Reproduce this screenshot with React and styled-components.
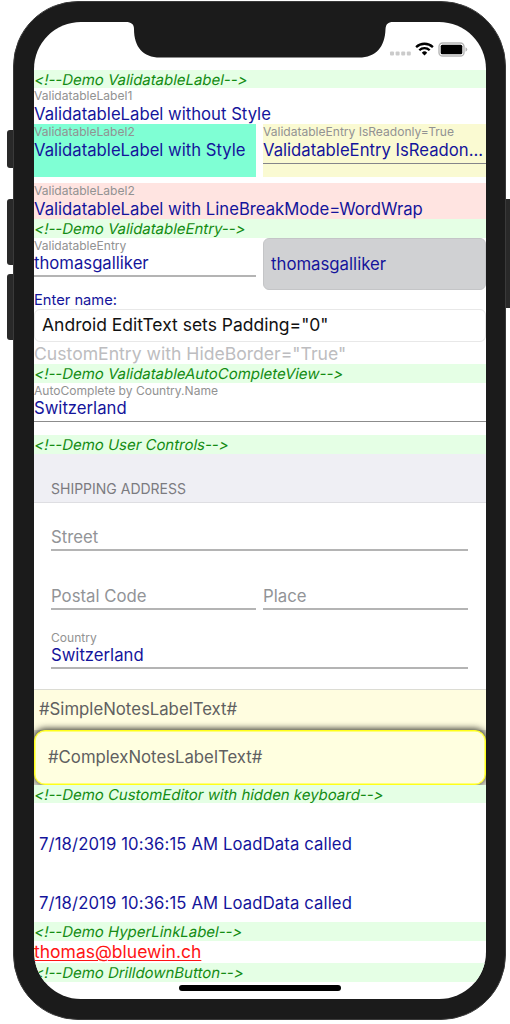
import React from "react";
import styled, { createGlobalStyle } from "styled-components";

const Global = createGlobalStyle`
  *, *::before, *::after { box-sizing: border-box; }
  body {
    margin: 0;
    background: #fff;
    font-family: Inter, "Liberation Sans", sans-serif;
    font-feature-settings: "calt" 0;
  }
`;

const Page = styled.main`
  width: 510px;
  height: 1024px;
  padding: 1px 0 0 13px;
  position: relative;
  overflow: hidden;
`;

const SideButton = styled.i`
  position: absolute;
  top: ${(p) => p.$top}px;
  ${(p) => p.$side}: ${(p) => (p.$side === "left" ? 7 : -3)}px;
  width: 12px;
  height: ${(p) => p.$height}px;
  border-radius: 3px;
  background: #292929;
`;

const Device = styled.div`
  position: relative;
  width: 493px;
  height: 1018.5px;
  padding: 20px 19px 20px 20px;
  border-radius: 65px;
  background: #1b1b1b;
  border: 1px solid #3a3a3a;
`;

const Screen = styled.div`
  position: relative;
  width: 452px;
  height: 976.5px;
  overflow: hidden;
  border-radius: 47px;
  background: #fff;
  display: flex;
  flex-direction: column;
`;

const Notch = styled.svg`
  position: absolute;
  top: -1px;
  left: 92px;
`;

const StatusBar = styled.header`
  height: 48px;
  flex: none;
  display: flex;
  justify-content: flex-end;
  padding: 19px 18px 0 0;
`;

const CommentBar = styled.div`
  flex: none;
  height: ${(p) => p.$h || 18.4}px;
  line-height: 18.4px;
  background: #e5ffe5;
  color: #148c14;
  font-size: 14.95px;
  white-space: nowrap;
`;

const Slanted = styled.span`
  display: block;
  width: fit-content;
  transform: translate(-1.3px, 0.6px) skewX(-11deg);
  transform-origin: left bottom;
`;

const Field = styled.div`
  flex: none;
  width: ${(p) => (p.$w ? p.$w + "px" : "auto")};
  height: ${(p) => p.$h}px;
  margin-top: ${(p) => p.$mt || 0}px;
  background: ${(p) => p.$bg || "transparent"};
`;

const Caption = styled.div`
  height: 14.6px;
  line-height: 15.6px;
  font-size: 12.05px;
  color: #929292;
  white-space: nowrap;
`;

const Value = styled.div`
  height: ${(p) => p.$h || 21.5}px;
  line-height: 22px;
  font-size: 16.7px;
  letter-spacing: ${(p) => p.$ls || 0}px;
  color: #14149b;
  white-space: nowrap;
  border-bottom: ${(p) => (p.$line ? `${p.$thick || 1}px solid ${p.$line}` : "none")};
`;

const Columns = styled.div`
  flex: none;
  display: flex;
  gap: 7px;
  margin-bottom: ${(p) => p.$mb || 0}px;
`;

const DisabledEntry = styled.div`
  width: 223px;
  height: 52.3px;
  padding: 0 7px;
  border: 1px solid #c4c5c7;
  border-radius: 6px;
  background: #d0d1d3;
  color: #14149b;
  font-size: 16.75px;
  line-height: 50px;
`;

const NameLabel = styled.div`
  flex: none;
  height: 18.5px;
  line-height: 20px;
  font-size: 14.7px;
  color: #14149b;
`;

const TextEntry = styled.div`
  flex: none;
  height: 33px;
  padding: 0 7px;
  border: 1px solid #e8e8e8;
  border-radius: 6px;
  font-size: 17.5px;
  line-height: 29px;
  color: #111;
  white-space: nowrap;
`;

const BareEntry = styled.div`
  flex: none;
  height: 22.8px;
  line-height: 23px;
  font-size: 17.6px;
  color: #bdbdc0;
  white-space: nowrap;
`;

const SectionHeader = styled.div`
  flex: none;
  height: 49px;
  padding: 26px 17px 0;
  border-bottom: 1px solid #dedee2;
  background: #efeff4;
  color: #7b7b80;
  font-size: 14px;
  line-height: 17px;
`;

const Form = styled.section`
  flex: none;
  height: 186.5px;
  padding: 24px 18px 0 17px;
`;

const FormInput = styled.div`
  flex: ${(p) => (p.$w ? "none" : 1)};
  width: ${(p) => (p.$w ? p.$w + "px" : "auto")};
  height: 24px;
  margin-bottom: 35px;
  border-bottom: 2px solid #b4b4b4;
  color: #929497;
  font-size: 16.75px;
  line-height: 21px;
`;

const SimpleNote = styled.div`
  flex: none;
  height: 40.5px;
  padding: 0 5px;
  border-top: 1px solid #dcdcd4;
  background: #fffde0;
  color: #606060;
  font-size: 16.75px;
  line-height: 39px;
`;

const NoteBed = styled.div`
  flex: none;
  height: 55.5px;
  background: #dadac8;
`;

const ComplexNote = styled.div`
  height: 55.5px;
  padding: 0 13px;
  border: 1px solid #ffff1a;
  border-radius: 11px;
  background: #ffffe0;
  box-shadow: 0 -1px 7px rgba(0, 0, 0, 0.85), inset 0 0 0 0.5px #ffff1a;
  color: #606060;
  font-size: 16.75px;
  line-height: 53px;
`;

const Editor = styled.div`
  flex: none;
  height: 119px;
  padding: 30px 0 0 5px;
  display: flex;
  flex-direction: column;
  gap: 37.5px;
`;

const Link = styled.a`
  flex: none;
  height: 22.2px;
  line-height: 22px;
  font-size: 17.5px;
  color: #ff1414;
  text-decoration: underline;
  text-decoration-thickness: 1px;
  text-underline-offset: 2px;
`;

const HomeIndicator = styled.i`
  position: absolute;
  left: 145px;
  bottom: 8px;
  width: 161.5px;
  height: 5.5px;
  border-radius: 3px;
  background: #000;
`;

function Comment({ children, height }) {
  return (
    <CommentBar $h={height}>
      <Slanted>{"<!--" + children + "-->"}</Slanted>
    </CommentBar>
  );
}

function StatusIcons() {
  return (
    <svg width="80" height="16" viewBox="0 0 80 16">
      <g fill="#cbcbcb">
        <rect x="2" y="10.4" width="4" height="4" rx="1" />
        <rect x="7.6" y="10.4" width="4" height="4" rx="1" />
        <rect x="13.2" y="10.4" width="4" height="4" rx="1" />
        <rect x="18.8" y="10.4" width="4" height="4" rx="1" />
      </g>
      <g fill="none" stroke="#000" strokeWidth="2.3">
        <path d="M28.1 6.1A12.2 12.2 0 0 1 44.9 6.1" />
        <path d="M31.3 9.3A7.4 7.4 0 0 1 41.7 9.3" />
      </g>
      <path d="M33.8 11.7A3.8 3.8 0 0 1 39.2 11.7L36.5 14.4Z" fill="#000" />
      <rect x="51" y="2" width="25" height="13" rx="3.6" fill="#fff" stroke="#b5b5b5" strokeWidth="1.4" />
      <rect x="52.7" y="3.7" width="21.6" height="9.6" rx="1.5" fill="#000" />
      <path d="M77.5 6.3Q79.3 7 79.3 8.5Q79.3 10 77.5 10.7Z" fill="#b5b5b5" />
    </svg>
  );
}

export default function App() {
  return (
    <Page>
      <Global />
      <SideButton $side="left" $top={130} $height={37.5} />
      <SideButton $side="left" $top={198.5} $height={66.5} />
      <SideButton $side="left" $top={273.5} $height={66.5} />
      <SideButton $side="right" $top={198.5} $height={109.5} />
      <Device>
        <Screen>
          <StatusBar><StatusIcons /></StatusBar>
          <Notch width="268" height="38" viewBox="0 0 268 38">
            <path d="M0 0V1C5 1 8 3 8 8C8 26 17 36.5 34 36.5H233C250 36.5 259 26 259.500 8C260 3 262 1 267 1V0Z" fill="#1b1b1b" />
          </Notch>

          <Comment>Demo ValidatableLabel</Comment>
          <Field $h={35.8}>
            <Caption>ValidatableLabel1</Caption>
            <Value>ValidatableLabel without Style</Value>
          </Field>
          <Columns $mb={6.5}>
            <Field $w={222} $h={52.4} $bg="#7fffd4">
              <Caption>ValidatableLabel2</Caption>
              <Value>ValidatableLabel with Style</Value>
            </Field>
            <Field $w={223} $h={52.4} $bg="#fafad2">
              <Caption>ValidatableEntry IsReadonly=True</Caption>
              <Value $h={25} $line="#85858a">ValidatableEntry IsReadon...</Value>
            </Field>
          </Columns>
          <Field $h={36.2} $bg="#ffe4e1">
            <Caption>ValidatableLabel2</Caption>
            <Value>ValidatableLabel with LineBreakMode=WordWrap</Value>
          </Field>

          <Comment>Demo ValidatableEntry</Comment>
          <Columns>
            <Field $w={222} $h={52.4}>
              <Caption>ValidatableEntry</Caption>
              <Value $h={25} $line="#b4b4b4" $thick={2}>thomasgalliker</Value>
            </Field>
            <DisabledEntry>thomasgalliker</DisabledEntry>
          </Columns>
          <NameLabel>Enter name:</NameLabel>
          <TextEntry>Android EditText sets Padding="0"</TextEntry>
          <BareEntry>CustomEntry with HideBorder="True"</BareEntry>

          <Comment>Demo ValidatableAutoCompleteView</Comment>
          <Field $h={52.4}>
            <Caption>AutoComplete by Country.Name</Caption>
            <Value $h={24.5} $line="#8c8c8c">Switzerland</Value>
          </Field>

          <Comment>Demo User Controls</Comment>
          <SectionHeader>SHIPPING ADDRESS</SectionHeader>
          <Form>
            <FormInput>Street</FormInput>
            <Columns>
              <FormInput $w={205}>Postal Code</FormInput>
              <FormInput>Place</FormInput>
            </Columns>
            <Field $h={40} $mt={-15}>
              <Caption>Country</Caption>
              <Value $h={25} $line="#b4b4b4" $thick={2}>Switzerland</Value>
            </Field>
          </Form>
          <SimpleNote>#SimpleNotesLabelText#</SimpleNote>
          <NoteBed><ComplexNote>#ComplexNotesLabelText#</ComplexNote></NoteBed>

          <Comment>Demo CustomEditor with hidden keyboard</Comment>
          <Editor>
            <Value $ls={0.11}>7/18/2019 10:36:15 AM LoadData called</Value>
            <Value $ls={0.11}>7/18/2019 10:36:15 AM LoadData called</Value>
          </Editor>
          <Comment>Demo HyperLinkLabel</Comment>
          <Link>thomas@bluewin.ch</Link>
          <Comment height={19}>Demo DrilldownButton</Comment>
          <HomeIndicator />
        </Screen>
      </Device>
    </Page>
  );
}
